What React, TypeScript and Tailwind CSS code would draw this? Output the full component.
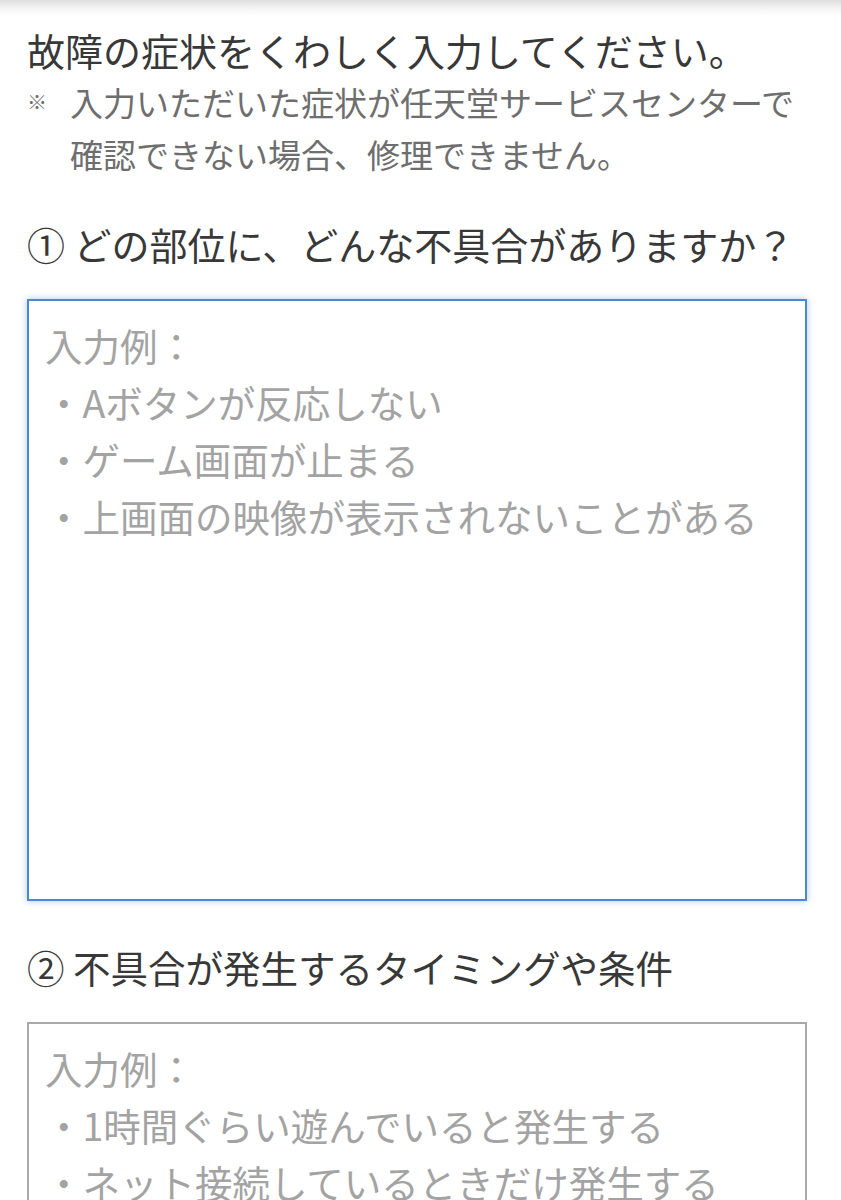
import React from "react";

const font = {
  fontFamily: '"Noto Sans CJK JP", "Noto Sans", sans-serif',
};

export default function App() {
  return (
    <div className="h-[1200px] overflow-hidden bg-white text-[#333]" style={font}>
      {/* header shadow */}
      <div className="h-[16px] bg-gradient-to-b from-[#dedede] via-[#f4f4f4] to-white" />

      <div className="pl-[27px] pr-[34px] pt-[8px]">
        <h2 className="text-[38px] leading-[52px] font-normal text-[#383838]">
          故障の症状をくわしく入力してください。
        </h2>
        <div className="flex text-[33px] leading-[52px] text-[#6e6e6e]">
          <span className="w-[43px] shrink-0 text-[20px]">※</span>
          <p>
            入力いただいた症状が任天堂サービスセンターで
            <br />
            確認できない場合、修理できません。
          </p>
        </div>

        <h3 className="mt-[38px] text-[38px] leading-[52px] font-normal text-[#383838]">
          ① どの部位に、どんな不具合がありますか？
        </h3>
        <textarea
          className="mt-[29px] block h-[602px] w-full resize-none border-2 border-[#4a88d0] pl-[16px] pt-[15px] text-[37.5px] leading-[57px] shadow-[0_0_7px_rgba(74,136,208,0.45)] outline-none placeholder:text-[#a3a3a3]"
          placeholder={"入力例：\n・Aボタンが反応しない\n・ゲーム画面が止まる\n・上画面の映像が表示されないことがある"}
        />

        <h3 className="mt-[40px] text-[37.5px] leading-[52px] font-normal text-[#383838]">
          ② 不具合が発生するタイミングや条件
        </h3>
        <textarea
          className="mt-[29px] block h-[400px] w-full resize-none border-2 border-[#a9a9a9] pl-[16px] pt-[15px] text-[37.5px] leading-[57px] outline-none placeholder:text-[#a3a3a3]"
          placeholder={"入力例：\n・1時間ぐらい遊んでいると発生する\n・ネット接続しているときだけ発生する"}
        />
      </div>
    </div>
  );
}
